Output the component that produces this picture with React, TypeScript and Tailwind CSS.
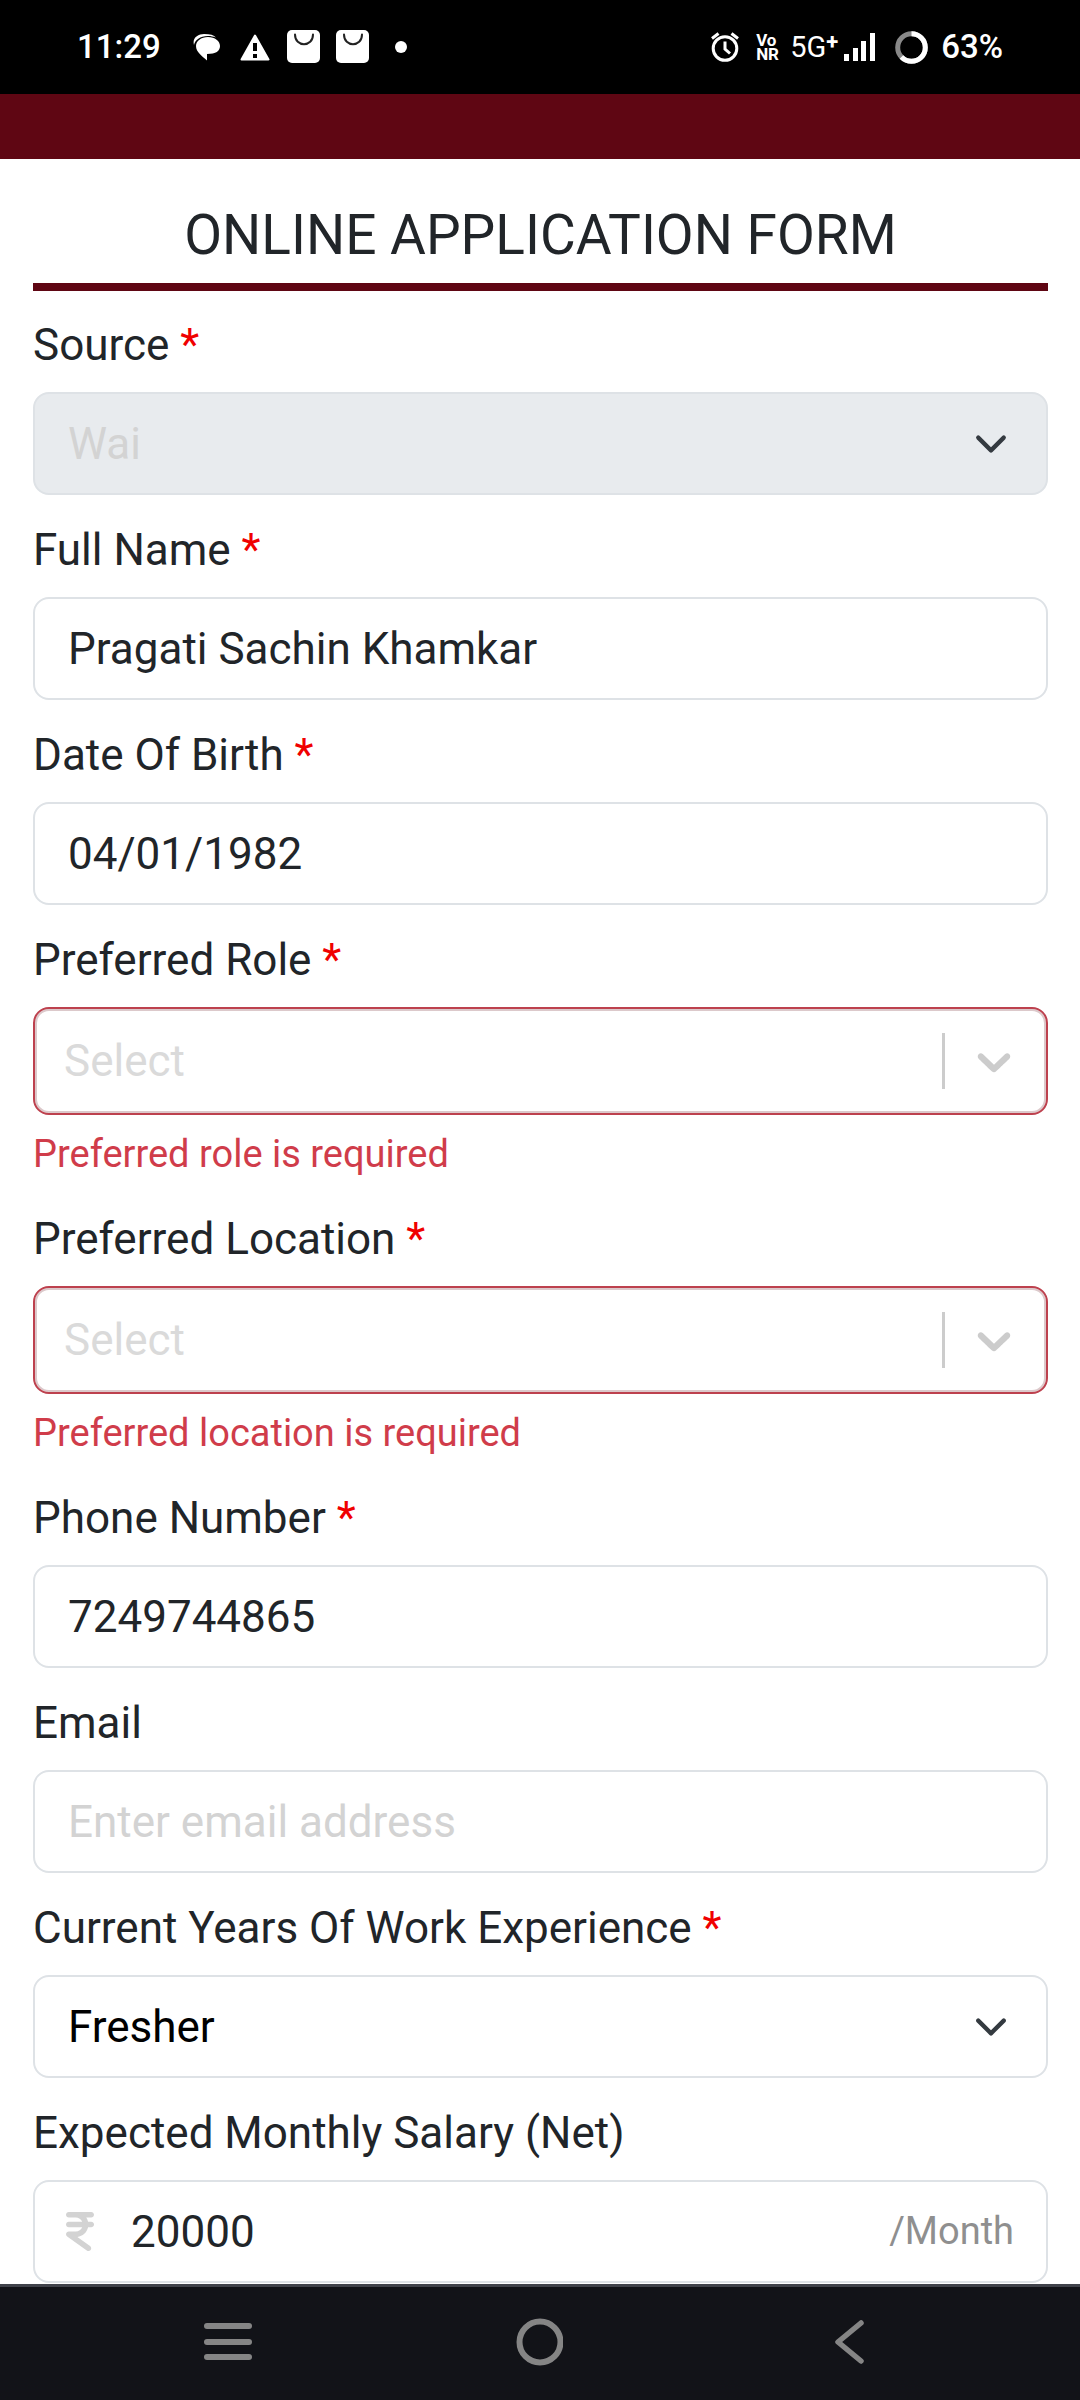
import { useState } from 'react';
import type { ReactNode } from 'react';
import clsx from 'clsx';
import { FaIndianRupeeSign } from 'react-icons/fa6';

const CONTROL =
	'block w-full h-[103px] px-[33px] rounded-2xl border-2 border-[#dee2e6] bg-white text-[44px] text-[#212529] placeholder:text-[#d3d3d3] placeholder:opacity-100 outline-none';

interface IField {
	id: string;
	label: string;
	required?: boolean;
	error?: string;
	children: ReactNode;
}

function Field({ id, label, required, error, children }: IField) {
	return (
		<div>
			<label
				htmlFor={id}
				className="block mb-[14px] text-[44px] leading-[66px] text-[#212529]"
			>
				{label}
				{required && <span className="text-[#f00000]"> *</span>}
			</label>
			{children}
			{error && (
				<p
					id={`${id}-error`}
					className="mt-[10px] text-[38px] leading-[59px] text-[#d03c4a]"
				>
					{error}
				</p>
			)}
		</div>
	);
}

interface ISelect {
	id: string;
	options: string[];
	disabled?: boolean;
}

function FormSelect({ id, options, disabled }: ISelect) {
	return (
		<div className="relative">
			<select
				id={id}
				disabled={disabled}
				className={clsx([
					CONTROL,
					'appearance-none disabled:opacity-100 disabled:bg-[#e8ebee] disabled:text-[#d3d3d3]',
					!disabled && 'text-black',
				])}
			>
				{options.map((option) => (
					<option key={option}>{option}</option>
				))}
			</select>
			<svg
				viewBox="0 0 16 16"
				className="absolute right-10 inset-y-0 my-auto size-[34px] pointer-events-none"
				fill="none"
				stroke="#343a40"
				strokeWidth="2"
				strokeLinecap="round"
				strokeLinejoin="round"
			>
				<path d="m2 5 6 6 6-6" />
			</svg>
		</div>
	);
}

function SearchSelect({ id, options }: ISelect) {
	return (
		<div className="relative">
			<select
				id={id}
				aria-invalid="true"
				aria-describedby={`${id}-error`}
				className="block w-full h-[108px] px-[29px] rounded-2xl border-2 border-[#bd414e] bg-white text-[44px] text-[#dadada] appearance-none outline-none shadow-[inset_0_0_0_2px_#dcc9cb]"
			>
				<option value="">Select</option>
				{options.map((option) => (
					<option key={option}>{option}</option>
				))}
			</select>
			<div className="absolute inset-y-0 right-[26px] flex items-center gap-[21px] pointer-events-none">
				<span className="w-[3px] h-14 bg-[#ccc]" />
				<svg viewBox="0 0 20 20" className="size-14" fill="#ccc">
					<path d="M4.516 7.548c0.436-0.446 1.043-0.481 1.576 0l3.908 3.747 3.908-3.747c0.533-0.481 1.141-0.446 1.574 0 0.436 0.445 0.408 1.197 0 1.615-0.406 0.418-4.695 4.502-4.695 4.502-0.217 0.223-0.502 0.335-0.787 0.335s-0.57-0.112-0.789-0.335c0 0-4.287-4.084-4.695-4.502s-0.436-1.17 0-1.615z" />
				</svg>
			</div>
		</div>
	);
}

function BagIcon() {
	return (
		<svg viewBox="0 0 33 34" className="w-[33px] h-[34px]">
			<rect width="33" height="33" rx="5" fill="#fff" />
			<path
				d="M8 4.500c0 13 18 13 18 0"
				fill="none"
				stroke="#222"
				strokeWidth="2"
				strokeLinecap="round"
			/>
		</svg>
	);
}

function StatusBar() {
	return (
		<header className="flex items-center justify-between h-[94px] px-[77px] bg-black text-white">
			<div className="flex items-center">
				<span className="text-[33px] font-medium">11:29</span>
				<svg viewBox="0 0 27 27" className="ml-8 size-[27px]" fill="#fff">
					<path d="M1 11C-1 4 5 0 11 0c6 0 10 1 12 3.500C20 2.500 18 2 15 2 7 2 2 6 1 11z" />
					<path d="M15 3c7 0 12 4 12 9s-4 8-13 8v6.500C9 22 3 18 3 12c0-5 5-9 12-9z" />
				</svg>
				<svg viewBox="0 0 30 27" className="ml-5 w-[30px] h-[27px]">
					<path
						d="M15 1.500 28.500 25.500H1.500z"
						fill="#fff"
						stroke="#fff"
						strokeWidth="2"
						strokeLinejoin="round"
					/>
					<path d="M15 9v8M15 20v4" stroke="#000" strokeWidth="4" />
				</svg>
				<span className="flex gap-4 ml-[17px]">
					<BagIcon />
					<BagIcon />
				</span>
				<span className="ml-[26px] size-3 rounded-full bg-white" />
			</div>
			<div className="flex items-center">
				<svg
					viewBox="0 0 28 30"
					className="w-7 h-[30px]"
					fill="none"
					stroke="#fff"
					strokeWidth="3"
				>
					<circle cx="14" cy="16.500" r="11.800" />
					<path d="M1 6.500 7.500 1.500M27 6.500 20.500 1.500" />
					<path d="M14 9.500v7.500l5 4.500" />
				</svg>
				<span className="ml-[17px] w-6 text-[17px] leading-[14px] font-bold">
					Vo NR
				</span>
				<span className="flex ml-[10px] text-[29px] leading-[34px]">
					5G
					<span className="text-[22px] leading-6 font-bold">+</span>
				</span>
				<svg viewBox="0 0 31 28" className="ml-[6px] w-[31px] h-7" fill="#fff">
					<path d="M0 21h5v7H0zM9 15h5v13H9zM17 8h5v20h-5zM26 0h5v28h-5z" />
				</svg>
				<svg
					viewBox="0 0 33 33"
					className="ml-5 size-[33px] -rotate-90"
					fill="none"
					strokeWidth="5"
				>
					<circle cx="16.500" cy="16.500" r="13.800" stroke="#888" />
					<circle
						cx="16.500"
						cy="16.500"
						r="13.800"
						stroke="#fff"
						pathLength="100"
						strokeDasharray="63 100"
					/>
				</svg>
				<span className="ml-[13px] text-[33px] font-medium">63%</span>
			</div>
		</header>
	);
}

function NavBar() {
	return (
		<nav className="flex items-center h-[116px] pl-[72px] pr-[74px] pb-[3px] border-t-3 border-[#40424a] bg-[#121318] text-[#858585]">
			<button type="button" aria-label="Recent apps" className="flex-1">
				<svg viewBox="0 0 48 48" className="mx-auto size-12" fill="currentColor">
					<rect y="5" width="48" height="6" rx="3" />
					<rect y="21" width="48" height="6" rx="3" />
					<rect y="36" width="48" height="6" rx="3" />
				</svg>
			</button>
			<button type="button" aria-label="Home" className="flex-1">
				<svg viewBox="0 0 48 48" className="mx-auto size-12" fill="none">
					<circle cx="25" cy="24" r="20.500" stroke="currentColor" strokeWidth="6" />
				</svg>
			</button>
			<button type="button" aria-label="Back" className="flex-1">
				<svg
					viewBox="0 0 48 48"
					className="mx-auto size-12"
					fill="none"
					stroke="currentColor"
					strokeWidth="5.500"
					strokeLinecap="round"
					strokeLinejoin="round"
				>
					<path d="M35 5 12 24l23 19" />
				</svg>
			</button>
		</nav>
	);
}

function Main() {
	const [form, setForm] = useState({
		fullName: 'Pragati Sachin Khamkar',
		dob: '04/01/1982',
		phone: '7249744865',
		email: '',
		salary: '20000',
	});

	const bind = (name: keyof typeof form) => ({
		id: name,
		value: form[name],
		onChange: (e: { target: { value: string } }) =>
			setForm({ ...form, [name]: e.target.value }),
	});

	return (
		<div className="flex flex-col min-h-screen bg-white font-['Roboto',sans-serif]">
			<StatusBar />
			<div className="h-[65px] bg-[#5f0613]" />
			<main className="flex-1 pl-[33px] pr-8 pt-[42px]">
				<h1 className="pb-[14px] border-b-8 border-[#5f0613] text-center text-[55px] leading-[68px] text-[#212529]">
					ONLINE APPLICATION FORM
				</h1>
				<form className="flex flex-col gap-[22px] pt-[21px]">
					<Field id="source" label="Source" required>
						<FormSelect id="source" options={['Wai']} disabled />
					</Field>
					<Field id="fullName" label="Full Name" required>
						<input type="text" className={CONTROL} {...bind('fullName')} />
					</Field>
					<Field id="dob" label="Date Of Birth" required>
						<input type="text" className={CONTROL} {...bind('dob')} />
					</Field>
					<Field
						id="role"
						label="Preferred Role"
						required
						error="Preferred role is required"
					>
						<SearchSelect id="role" options={[]} />
					</Field>
					<Field
						id="location"
						label="Preferred Location"
						required
						error="Preferred location is required"
					>
						<SearchSelect id="location" options={[]} />
					</Field>
					<Field id="phone" label="Phone Number" required>
						<input type="tel" className={CONTROL} {...bind('phone')} />
					</Field>
					<Field id="email" label="Email">
						<input
							type="email"
							placeholder="Enter email address"
							className={CONTROL}
							{...bind('email')}
						/>
					</Field>
					<Field
						id="experience"
						label="Current Years Of Work Experience"
						required
					>
						<FormSelect id="experience" options={['Fresher']} />
					</Field>
					<Field id="salary" label="Expected Monthly Salary (Net)">
						<div className="flex items-center h-[103px] pl-[31px] pr-8 rounded-2xl border-2 border-[#dee2e6]">
							<FaIndianRupeeSign className="w-7 h-[45px] text-[#d3d3d3]" />
							<input
								type="text"
								inputMode="numeric"
								className="flex-1 min-w-0 ml-[37px] text-[44px] text-[#212529] outline-none"
								{...bind('salary')}
							/>
							<span className="text-[38px] text-[#8f8f8f]">/Month</span>
						</div>
					</Field>
				</form>
			</main>
			<NavBar />
		</div>
	);
}

export default Main;
